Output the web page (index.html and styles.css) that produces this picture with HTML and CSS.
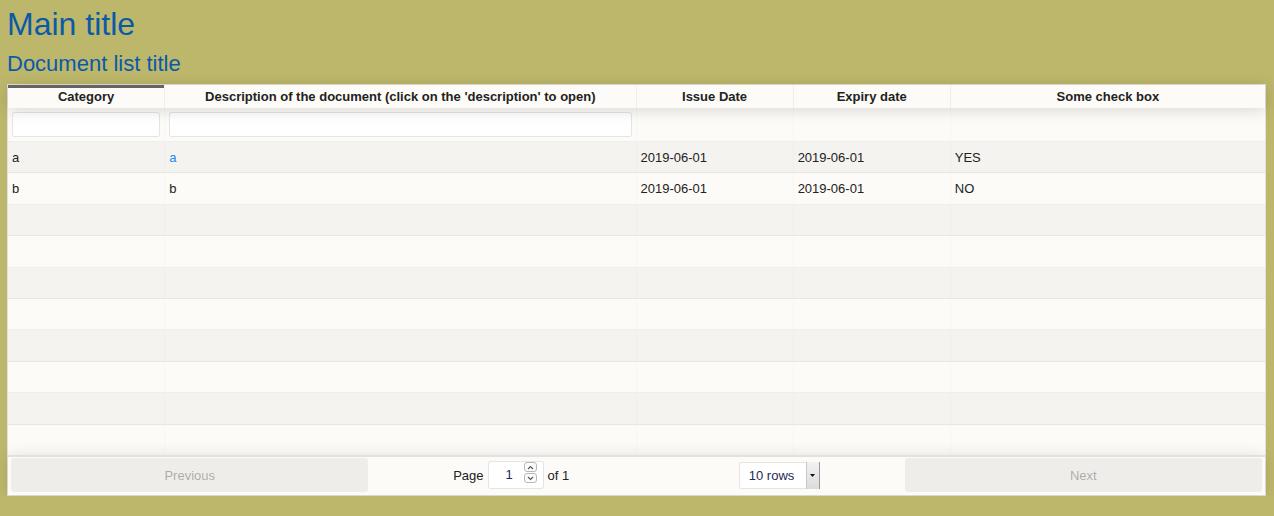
FILE: index.html
```html
<!DOCTYPE html>
<html>
<head>
<meta charset="utf-8">
<link rel="stylesheet" href="styles.css">
</head>
<body>
<div class="page">
  <h1 class="main-title">Main title</h1>
  <h2 class="list-title">Document list title</h2>
  <div class="rtable">
    <div class="thead header">
      <div class="tr">
        <div class="th sorted">Category</div>
        <div class="th">Description of the document (click on the 'description' to open)</div>
        <div class="th">Issue Date</div>
        <div class="th">Expiry date</div>
        <div class="th last">Some check box</div>
      </div>
    </div>
    <div class="thead filters">
      <div class="tr">
        <div class="fc"><div class="finput"></div></div>
        <div class="fc"><div class="finput"></div></div>
        <div class="fc"></div>
        <div class="fc"></div>
        <div class="fc last"></div>
      </div>
    </div>
    <div class="tbody">
      <div class="tr odd"><div class="td">a</div><div class="td"><span class="link">a</span></div><div class="td">2019-06-01</div><div class="td">2019-06-01</div><div class="td last">YES</div></div>
      <div class="tr"><div class="td">b</div><div class="td">b</div><div class="td">2019-06-01</div><div class="td">2019-06-01</div><div class="td last">NO</div></div>
      <div class="tr odd"><div class="td"></div><div class="td"></div><div class="td"></div><div class="td"></div><div class="td last"></div></div>
      <div class="tr"><div class="td"></div><div class="td"></div><div class="td"></div><div class="td"></div><div class="td last"></div></div>
      <div class="tr odd"><div class="td"></div><div class="td"></div><div class="td"></div><div class="td"></div><div class="td last"></div></div>
      <div class="tr"><div class="td"></div><div class="td"></div><div class="td"></div><div class="td"></div><div class="td last"></div></div>
      <div class="tr odd"><div class="td"></div><div class="td"></div><div class="td"></div><div class="td"></div><div class="td last"></div></div>
      <div class="tr"><div class="td"></div><div class="td"></div><div class="td"></div><div class="td"></div><div class="td last"></div></div>
      <div class="tr odd"><div class="td"></div><div class="td"></div><div class="td"></div><div class="td"></div><div class="td last"></div></div>
      <div class="tr"><div class="td"></div><div class="td"></div><div class="td"></div><div class="td"></div><div class="td last"></div></div>
    </div>
    <div class="pagination">
      <div class="side"><div class="btn">Previous</div></div>
      <div class="center">
        <div class="page-info">Page <span class="page-jump"><span class="pj-val">1</span><span class="spinner"><span class="spin"><svg width="7" height="5" viewBox="0 0 7 5"><path d="M1 4 L3.5 1.5 L6 4" fill="none" stroke="#555" stroke-width="1.1"/></svg></span><span class="spin"><svg width="7" height="5" viewBox="0 0 7 5"><path d="M1 1 L3.5 3.5 L6 1" fill="none" stroke="#555" stroke-width="1.1"/></svg></span></span></span> of 1</div>
        <div class="page-size"><span class="ps-val">10 rows</span><span class="ps-arrow"><svg width="5" height="3" viewBox="0 0 5 3"><path d="M0 0 H5 L2.5 3 Z" fill="#111"/></svg></span></div>
      </div>
      <div class="side"><div class="btn">Next</div></div>
    </div>
  </div>
</div>
</body>
</html>
```
FILE: styles.css
```css
html, body {
  margin: 0;
  padding: 0;
  background: #bdb76b;
}
body {
  font-family: "Liberation Sans", Arial, sans-serif;
  font-size: 13px;
  color: #222;
}
.page {
  padding: 6px 8px 0 7px;
}
.main-title {
  margin: 0;
  font-size: 32px;
  line-height: 37px;
  font-weight: normal;
  color: #0b5aa8;
}
.list-title {
  margin: 8px 0 8px;
  font-size: 22px;
  line-height: 25px;
  font-weight: normal;
  color: #0b5aa8;
}
.rtable {
  background: #fcfbf7;
  border: 1px solid rgba(0, 0, 0, 0.1);
  display: flex;
  flex-direction: column;
}
.tr {
  display: grid;
  grid-template-columns: 1fr 3fr 1fr 1fr 2fr;
}
.header {
  position: relative;
  z-index: 2;
  box-shadow: 0 2px 15px 0 rgba(0, 0, 0, 0.15);
  background: #fcfbf7;
}
.th {
  height: 23px;
  box-sizing: border-box;
  padding: 4px 5px;
  line-height: 15px;
  font-weight: bold;
  text-align: center;
  border-right: 1px solid rgba(0, 0, 0, 0.05);
  white-space: nowrap;
  overflow: hidden;
}
.th.sorted {
  box-shadow: inset 0 3px 0 0 rgba(0, 0, 0, 0.6);
}
.last {
  border-right: none !important;
}
.filters {
  border-bottom: 1px solid rgba(0, 0, 0, 0.05);
}
.fc {
  height: 33px;
  box-sizing: border-box;
  padding: 4px 4px;
  border-right: 1px solid rgba(0, 0, 0, 0.02);
}
.finput {
  height: 25px;
  box-sizing: border-box;
  background: #fff;
  border: 1px solid rgba(0, 0, 0, 0.1);
  border-radius: 3px;
}
.tbody {
  height: 313px;
  display: flex;
  flex-direction: column;
}
.tbody .tr {
  flex: 1;
  border-bottom: 1px solid rgba(0, 0, 0, 0.05);
}
.tbody .tr:last-child {
  border-bottom: none;
}
.tbody .tr.odd {
  background: rgba(0, 0, 0, 0.03);
}
.td {
  display: flex;
  align-items: center;
  padding: 0 4px;
  border-right: 1px solid rgba(0, 0, 0, 0.02);
  white-space: nowrap;
  overflow: hidden;
}
.link {
  color: #1f88f2;
}
.pagination {
  position: relative;
  z-index: 2;
  display: flex;
  padding: 1px 3px 3px;
  border-top: 2px solid rgba(0, 0, 0, 0.1);
  box-shadow: 0 0 15px 0 rgba(0, 0, 0, 0.1);
  background: #fcfbf7;
}
.side {
  flex: 1;
  display: flex;
}
.btn {
  flex: 1;
  height: 34px;
  border-radius: 3px;
  background: rgba(0, 0, 0, 0.055);
  color: rgba(0, 0, 0, 0.3);
  display: flex;
  align-items: center;
  justify-content: center;
}
.center {
  flex: 1.5;
  display: flex;
  align-items: center;
  justify-content: space-around;
}
.page-info {
  margin: 0 10px;
  white-space: nowrap;
  display: flex;
  align-items: center;
  gap: 4px;
}
.page-jump {
  display: flex;
  align-items: flex-start;
  width: 56px;
  height: 28px;
  box-sizing: border-box;
  background: #fff;
  border: 1px solid rgba(0, 0, 0, 0.1);
  border-radius: 3px;
  color: #1d2b55;
}
.pj-val {
  line-height: 26px;
  margin-left: 17px;
}
.spinner {
  margin-left: auto;
  margin-right: 6px;
  display: flex;
  flex-direction: column;
  gap: 1px;
  margin-top: 0;
}
.spin {
  width: 13px;
  height: 10px;
  box-sizing: border-box;
  border: 1px solid #b8b8b8;
  border-radius: 3px;
  display: flex;
  align-items: center;
  justify-content: center;
  background: #fbfbfb;
}
.page-size {
  margin: 0 10px;
  display: flex;
  width: 81px;
  height: 27px;
  box-sizing: border-box;
  background: #fff;
  border: 1px solid rgba(0, 0, 0, 0.1);
  border-radius: 3px 0 0 3px;
  color: #1d2b55;
}
.ps-val {
  flex: 1;
  line-height: 25px;
  padding-left: 9px;
}
.ps-arrow {
  width: 12px;
  margin: -1px -1px -1px 0;
  background: linear-gradient(#f2f2f2, #dcdcdc);
  border-left: 1px solid #c8c8c8;
  border-right: 1px solid #999;
  display: flex;
  align-items: center;
  justify-content: center;
}
```
